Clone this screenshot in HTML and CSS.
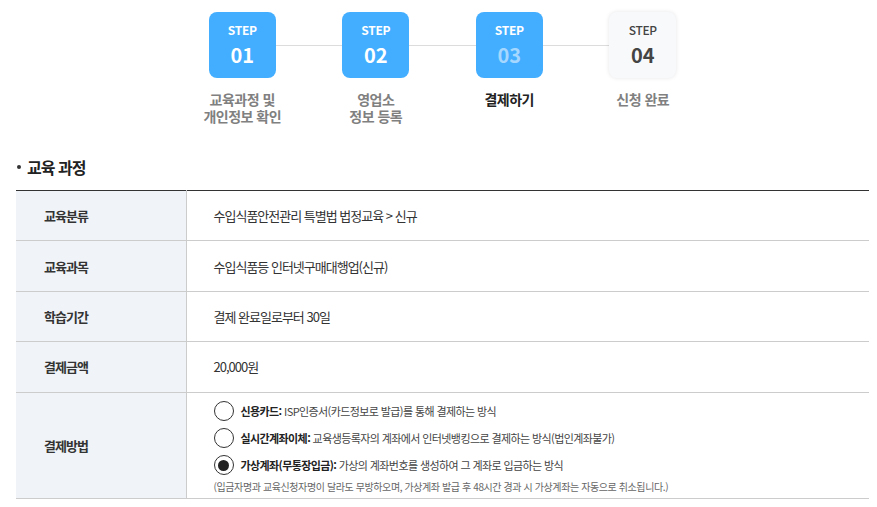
FILE: index.html
```html
<!DOCTYPE html>
<html lang="ko">
<head>
    <meta charset="UTF-8">
    <meta name="viewport" content="width=device-width, initial-scale=1.0">
    <link rel="stylesheet" href="styles.css">
    <title>결제하기</title>
</head>
<body>
    <div class="wrap">

        <ol class="steps">
            <li class="step done">
                <div class="box"><span class="tit">STEP</span><span class="num">01</span></div>
                <p class="label">교육과정 및<br>개인정보 확인</p>
            </li>
            <li class="step done">
                <div class="box"><span class="tit">STEP</span><span class="num">02</span></div>
                <p class="label">영업소<br>정보 등록</p>
            </li>
            <li class="step on">
                <div class="box"><span class="tit">STEP</span><span class="num">03</span></div>
                <p class="label">결제하기</p>
            </li>
            <li class="step">
                <div class="box"><span class="tit">STEP</span><span class="num">04</span></div>
                <p class="label">신청 완료</p>
            </li>
        </ol>

        <h3 class="sec-tit">교육 과정</h3>

        <table class="info">
            <tbody>
                <tr>
                    <th>교육분류</th>
                    <td>수입식품안전관리 특별법 법정교육 &gt; 신규</td>
                </tr>
                <tr>
                    <th>교육과목</th>
                    <td>수입식품등 인터넷구매대행업(신규)</td>
                </tr>
                <tr>
                    <th>학습기간</th>
                    <td>결제 완료일로부터 30일</td>
                </tr>
                <tr>
                    <th>결제금액</th>
                    <td>20,000원</td>
                </tr>
                <tr class="pay">
                    <th>결제방법</th>
                    <td>
                        <label class="radio"><input type="radio" name="pay"><span class="mark"></span><span><b>신용카드:</b> ISP인증서(카드정보로 발급)를 통해 결제하는 방식</span></label>
                        <label class="radio"><input type="radio" name="pay"><span class="mark"></span><span><b>실시간계좌이체:</b> 교육생등록자의 계좌에서 인터넷뱅킹으로 결제하는 방식(법인계좌불가)</span></label>
                        <label class="radio"><input type="radio" name="pay" checked><span class="mark"></span><span><b>가상계좌(무통장입금):</b> 가상의 계좌번호를 생성하여 그 계좌로 입금하는 방식</span></label>
                        <p class="note">(입금자명과 교육신청자명이 달라도 무방하오며, 가상계좌 발급 후 48시간 경과 시 가상계좌는 자동으로 취소됩니다.)</p>
                    </td>
                </tr>
            </tbody>
        </table>
    </div>
</body>
</html>
```

FILE: styles.css
```css
*{
    margin:0;
    padding:0;
    box-sizing:border-box;
    font-family:"Noto Sans CJK KR", "Noto Sans", sans-serif;
}
body{
    background:#fff;
    color:#333;
}
.wrap{
    padding:12px 8px 0 16px;
}

/* steps */
.steps{
    list-style:none;
    position:relative;
    display:flex;
    justify-content:center;
}
.steps::before{
    content:"";
    position:absolute;
    top:33px;
    left:236px;
    width:400px;
    height:1px;
    background:#dcdcdc;
}
.step{
    width:133.5px;
    display:flex;
    flex-direction:column;
    align-items:center;
    position:relative;
}
.box{
    width:67px;
    height:66px;
    border-radius:8px;
    background:#43aeff;
    color:#fff;
    display:flex;
    flex-direction:column;
    align-items:center;
    padding-top:10px;
}
.tit{
    font-size:12px;
    font-weight:700;
    line-height:16px;
    letter-spacing:-0.3px;
}
.num{
    font-size:20px;
    font-weight:700;
    line-height:28px;
    margin-top:3px;
}
.step.on .num{
    color:#a6d8ff;
}
.step:last-child .box{
    background:#f8f9fb;
    color:#444;
    box-shadow:0 0 4px rgba(0,0,0,0.1);
}
.step:last-child .tit{
    font-weight:500;
}
.label{
    margin-top:13px;
    font-size:14px;
    line-height:17px;
    font-weight:700;
    color:#808080;
    text-align:center;
    letter-spacing:-0.5px;
}
.step.on .label{
    color:#222;
}

/* section */
.sec-tit{
    margin-top:32px;
    font-size:16px;
    font-weight:700;
    color:#222;
    line-height:20px;
    letter-spacing:-1px;
    display:flex;
    align-items:center;
}
.sec-tit::before{
    content:"";
    width:4px;
    height:4px;
    border-radius:50%;
    background:#333;
    margin:0 6px 0 1px;
}

/* table */
.info{
    margin-top:13px;
    width:853px;
    border-collapse:collapse;
    border-top:1px solid #333;
    font-size:13px;
    letter-spacing:-1px;
}
.info tr{
    border-bottom:1px solid #ccc;
}
.info th{
    width:170px;
    height:50.4px;
    background:#f0f3f7;
    border-right:1px solid #ccc;
    text-align:left;
    padding-left:28px;
    font-weight:700;
    color:#333;
}
.info td{
    padding-left:27px;
    color:#333;
}
.info .pay td{
    padding-top:5px;
    padding-bottom:3px;
}
.radio{
    display:flex;
    align-items:center;
    height:27px;
    font-size:11px;
    color:#444;
    letter-spacing:-0.6px;
}
.radio input{
    display:none;
}
.radio b{
    color:#222;
}
.mark{
    width:20px;
    height:20px;
    border:1px solid #333;
    border-radius:50%;
    margin-right:7px;
    display:flex;
    align-items:center;
    justify-content:center;
    flex-shrink:0;
}
.radio input:checked + .mark::after{
    content:"";
    width:11px;
    height:11px;
    border-radius:50%;
    background:#222;
}
.note{
    font-size:10px;
    color:#666;
    letter-spacing:-0.4px;
    line-height:16px;
}
```
